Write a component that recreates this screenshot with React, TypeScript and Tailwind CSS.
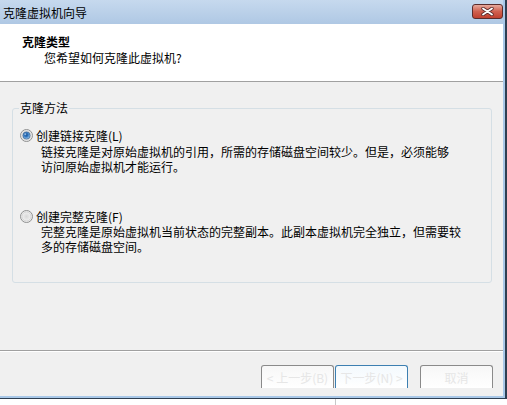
import React from "react";

function Radio({ checked }: { checked: boolean }) {
  return (
    <svg width="13" height="13" viewBox="0 0 13 13" className="shrink-0">
      <defs>
        <radialGradient id="rg-in" cx="50%" cy="50%" r="50%">
          <stop offset="0%" stopColor="#d8d8d8" />
          <stop offset="100%" stopColor="#f7f7f7" />
        </radialGradient>
        <radialGradient id="rg-dot" cx="45%" cy="40%" r="60%">
          <stop offset="0%" stopColor="#1d4f8c" />
          <stop offset="45%" stopColor="#2f75bf" />
          <stop offset="100%" stopColor="#a9d2f3" />
        </radialGradient>
      </defs>
      <circle cx="6.5" cy="6.5" r="6" fill="url(#rg-in)" stroke="#8e8f8f" strokeWidth="1" />
      <circle cx="6.5" cy="6.5" r="4.6" fill="none" stroke="#c9c9c9" strokeWidth="0.8" />
      {checked && (
        <>
          <circle cx="6.5" cy="6.5" r="3.6" fill="url(#rg-dot)" stroke="#1b4a80" strokeWidth="0.6" />
          <circle cx="5.3" cy="5.2" r="1" fill="#bfe0fb" opacity="0.7" />
        </>
      )}
    </svg>
  );
}

function Btn({ label, focused }: { label: string; focused?: boolean }) {
  return (
    <div
      className={
        focused
          ? "w-[73px] h-[23px] rounded-t-[3px] border-t border-x border-[#3c7fb1] bg-[linear-gradient(to_bottom,#f3f9fd,#ffffff)] flex items-center justify-center text-[#e6e6e6] text-[12px]"
          : "w-[73px] h-[23px] rounded-t-[3px] border-t border-x border-[#8a8a8a] bg-[linear-gradient(to_bottom,#f7f7f7,#ffffff)] flex items-center justify-center text-[#e6e6e6] text-[12px]"
      }
    >
      {label}
    </div>
  );
}

export default function App() {
  return (
    <div className="w-[507px] h-[405px] bg-white overflow-hidden flex flex-col font-['Noto_Sans_CJK_SC','Noto_Sans',sans-serif] text-[12px] leading-[15px] text-black">
      <div className="w-[507px] h-[399px] flex flex-col bg-[#a9c8e8] border-r-2 border-b border-[#2e3f52] pr-[2px] pb-[2px]">
        <div className="h-[24px] shrink-0 flex items-start justify-between pl-[3px] bg-[linear-gradient(to_bottom,#c6d9ee,#afc8e4)]">
          <span className="mt-[5px]">克隆虚拟机向导</span>
          <div className="mt-[4px] w-[31px] h-[15px] rounded-[3px] border border-[#5b2c2c] bg-[linear-gradient(to_bottom,#e7a99c,#d0604f_50%,#c0402f)] flex items-center justify-center">
            <svg width="13" height="9" viewBox="0 0 13 9">
              <path d="M2 1.5 L11 7.5 M11 1.5 L2 7.5" stroke="#5a2a2a" strokeWidth="3.4" strokeLinecap="round" />
              <path d="M2 1.5 L11 7.5 M11 1.5 L2 7.5" stroke="#ffffff" strokeWidth="1.8" strokeLinecap="round" />
            </svg>
          </div>
        </div>
        <div className="flex-1 bg-[#f0f0f0] flex flex-col">
          <div className="h-[58px] shrink-0 bg-white border-b border-[#a0a0a0] pt-[10px] pl-[22px]">
            <div className="font-bold">克隆类型</div>
            <div className="pl-[22px] mt-[0.5px]">您希望如何克隆此虚拟机?</div>
          </div>
          <div className="pt-[26px] pl-[12px]">
            <div className="relative w-[480px] h-[175px] border border-[#d5dfe5] rounded-[3px] pt-[19px]">
              <div className="absolute -top-[9px] left-[6px] px-[1px] bg-[#f0f0f0]">克隆方法</div>
              <div className="flex items-center pl-[7px] gap-[3px] h-[15px]">
                <Radio checked />
                <span>创建链接克隆(L)</span>
              </div>
              <div className="pl-[28px] mt-[1px]">
                <div>链接克隆是对原始虚拟机的引用，所需的存储磁盘空间较少。但是，必须能够</div>
                <div>访问原始虚拟机才能运行。</div>
              </div>
              <div className="flex items-center pl-[7px] gap-[3px] h-[15px] mt-[35px]">
                <Radio checked={false} />
                <span>创建完整克隆(F)</span>
              </div>
              <div className="pl-[28px]">
                <div>完整克隆是原始虚拟机当前状态的完整副本。此副本虚拟机完全独立，但需要较</div>
                <div>多的存储磁盘空间。</div>
              </div>
            </div>
          </div>
          <div className="mt-[67px] h-[2px] border-t border-[#a0a0a0] border-b border-b-white" />
          <div className="mt-[13px] flex pl-[261px]">
            <Btn label="< 上一步(B)" />
            <div className="ml-[1px]">
              <Btn label="下一步(N) >" focused />
            </div>
            <div className="ml-[12px]">
              <Btn label="取消" />
            </div>
          </div>
        </div>
      </div>
      <div className="h-[6px] flex">
        <div className="ml-[335px] w-px h-full bg-[#c8c8c8]" />
      </div>
    </div>
  );
}
